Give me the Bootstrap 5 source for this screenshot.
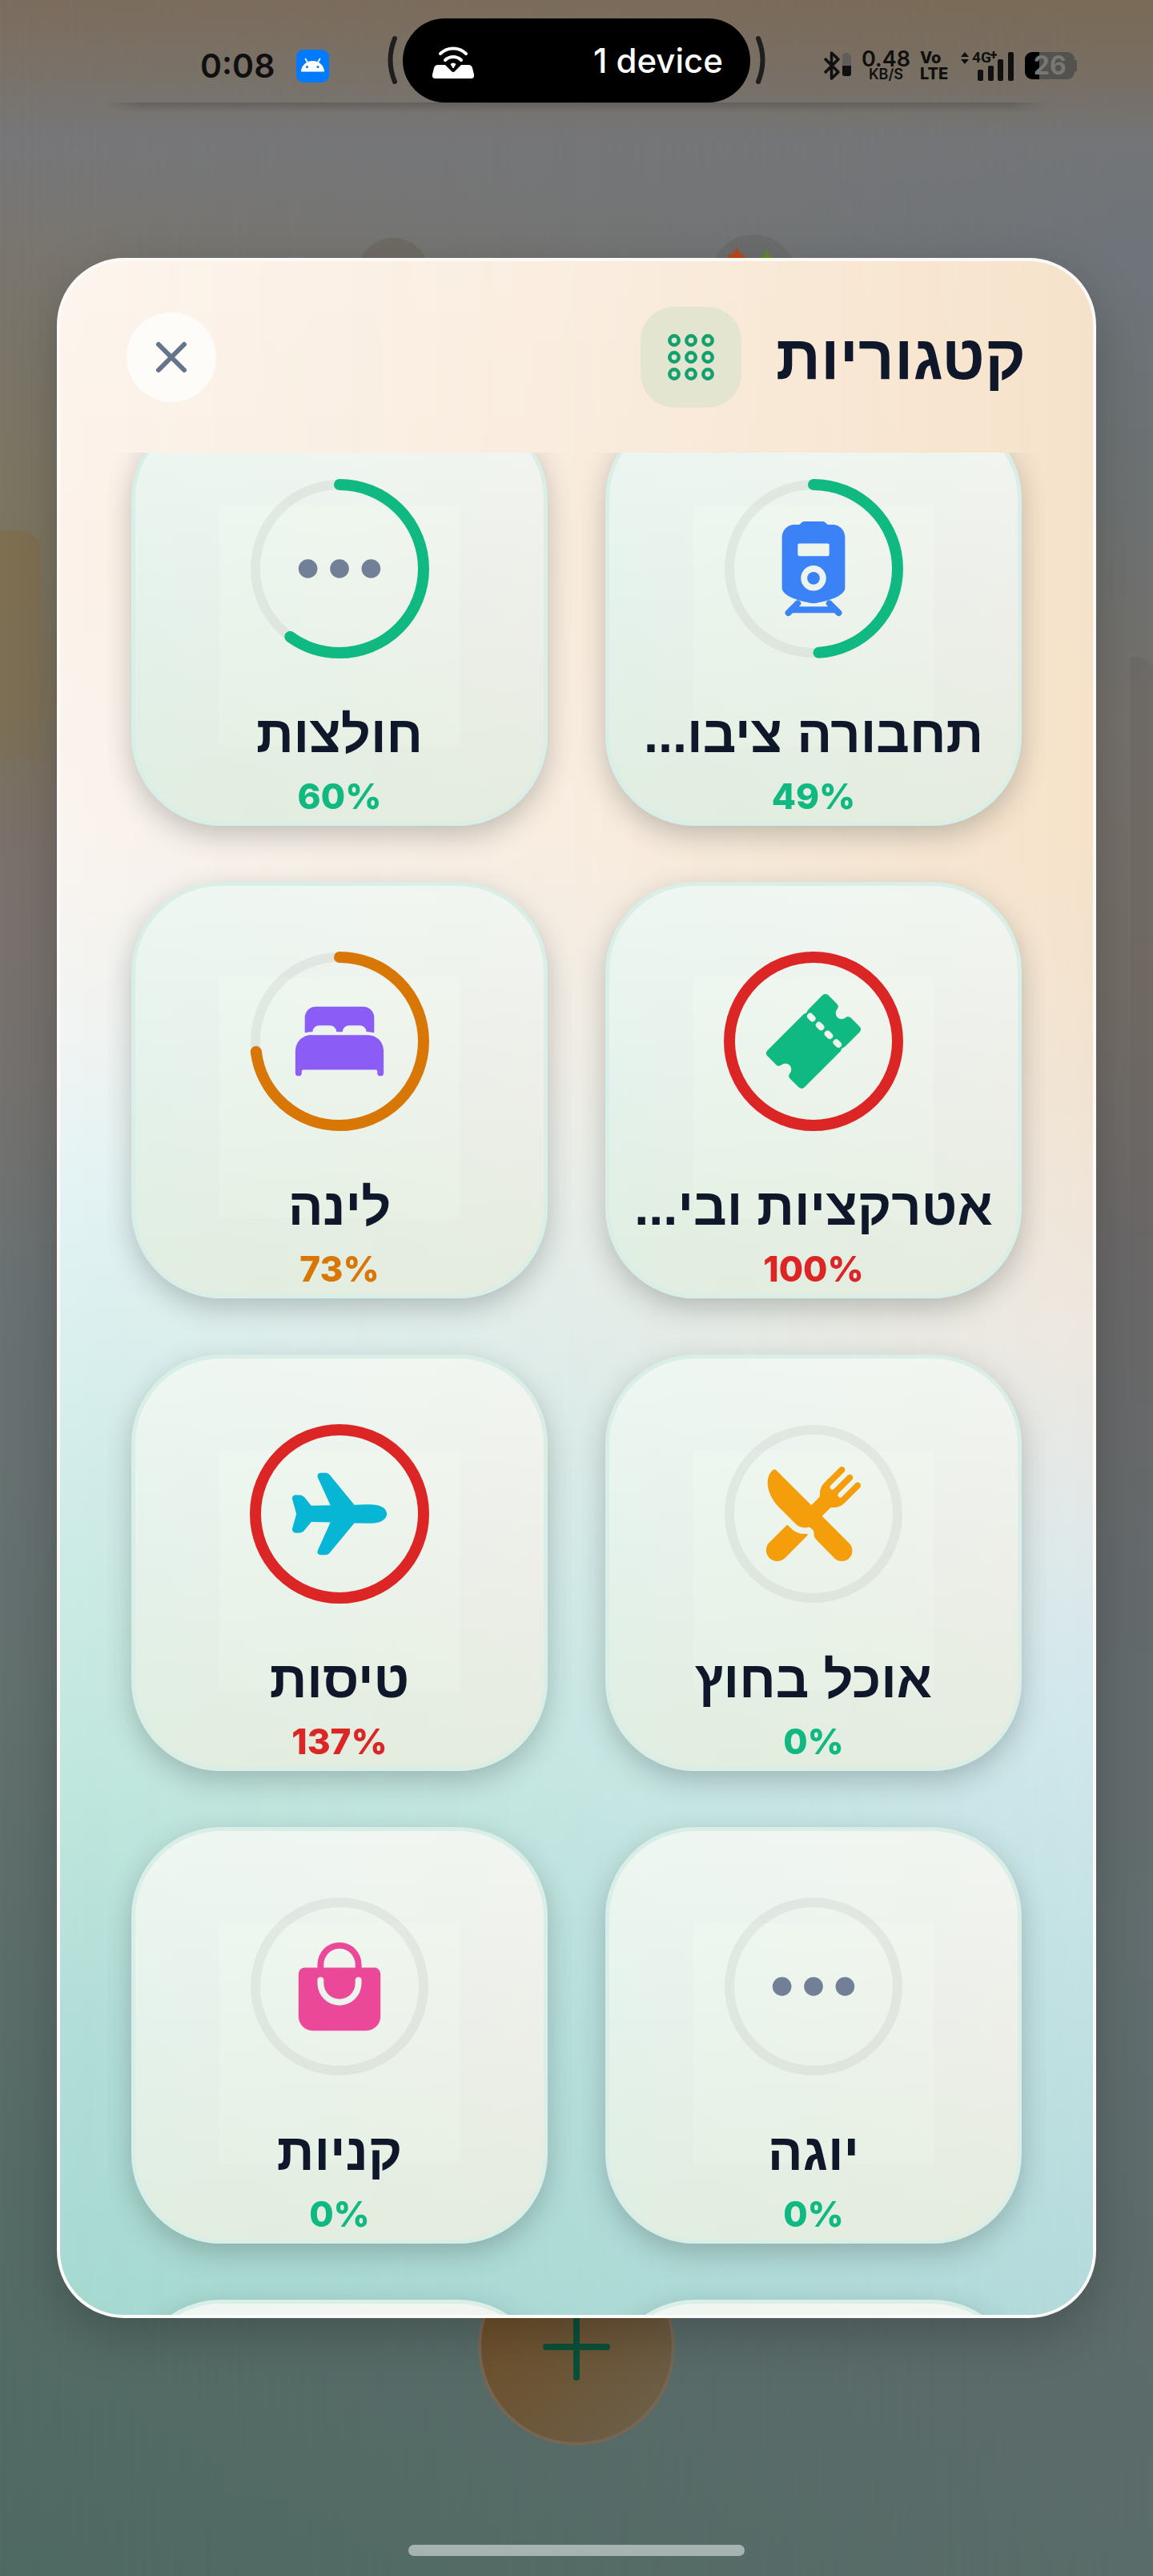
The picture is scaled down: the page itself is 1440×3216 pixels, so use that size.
<!DOCTYPE html>
<html lang="he">
<head>
<meta charset="utf-8">
<meta name="viewport" content="width=device-width, initial-scale=1">
<title>קטגוריות</title>
<link href="https://cdn.jsdelivr.net/npm/bootstrap@5.3.0/dist/css/bootstrap.min.css" rel="stylesheet">
<style>
:root{--ink:#0f172a;--green:#10b981;--red:#dc2626;--amber:#d97706}
body{margin:0;font-family:Inter,"Liberation Sans",sans-serif;background:#6b7273}
.screen{height:100vh;overflow:hidden;position:relative;isolation:isolate;
  background:linear-gradient(to bottom,#7c6d5e 0,#7a736a 3%,#77777a 5.5%,#7a766e 10%,#7c7662 19%,#7b7159 27%,#7b716c 33%,#75726f 42%,#6a7273 50%,#62706e 66%,#576c67 84%,#4f6a63 100%)}
.screen::before{content:"";position:absolute;inset:0;z-index:-1;
  background:linear-gradient(to bottom,#7a6a56 0,#786e63 3%,#737577 5.5%,#6e747a 10%,#6c7172 19%,#74706b 28%,#736d66 38%,#6b6868 48%,#646a6c 62%,#616d6e 75%,#5d6b6b 90%,#5a6c69 100%);
  -webkit-mask-image:linear-gradient(to right,transparent,#000);mask-image:linear-gradient(to right,transparent,#000)}
/* status bar */
.statusbar{display:grid;grid-template-columns:minmax(0,1fr) auto minmax(0,1fr);height:128px;padding-top:23px;color:#101010}
.status-side{height:105px;padding-top:13px}
.status-start{padding-left:250px;gap:27px}
.status-end{padding-left:72px;gap:12px}
.clock{font-size:41px;font-weight:600;line-height:48px}
.pill{width:434px;height:105px;border-radius:53px;background:#000;color:#fff;padding:0 34px 0 36px;font-size:42px;font-weight:500}
.net-a{font-size:27px;font-weight:600;line-height:21px}
.net-b{font-size:18px;font-weight:600;line-height:18px}
.net-c{font-size:20px;font-weight:800;line-height:20px}
.battery{width:62px;height:34px;border-radius:9px;background:linear-gradient(to right,#000 18px,#53524e 18px);color:#777774;font-size:32px;font-weight:700;line-height:34px}
/* page behind the sheet */
.behind{height:194px;overflow:hidden}
.edge-shadow{height:12px;margin:0 130px;background:linear-gradient(to bottom,rgba(40,40,40,.26),rgba(40,40,40,0));
  -webkit-mask-image:linear-gradient(to right,transparent,#000 4%,#000 96%,transparent);mask-image:linear-gradient(to right,transparent,#000 4%,#000 96%,transparent)}
.behind-icons{padding-top:153px;gap:351px;padding-left:446px}
.ghost{width:90px;height:90px;border-radius:50%;background:#6f6b64;margin-top:4px}
.ghost-lg{width:108px;height:108px;border-radius:50%;background:#6a6d6b}
.blob{position:absolute;left:0;top:662px;width:51px;height:284px;background:linear-gradient(to bottom,rgba(128,110,78,.85),rgba(124,110,84,.5));border-radius:0 26px 0 0;z-index:-1}
.blob-end{position:absolute;right:0;top:820px;width:28px;height:1000px;background:linear-gradient(to bottom,rgba(60,50,50,.1),transparent);border-radius:0 20px 0 0;z-index:-1}
/* sheet */
.sheet-wrap{flex:1 1 0;min-height:0;filter:drop-shadow(0 20px 30px rgba(0,0,0,.2))}
.sheet{flex:1 1 0;min-height:0;margin:0 71px;border:4px solid #fbfaf8;border-radius:84px;overflow:hidden;position:relative;isolation:isolate;
  background:linear-gradient(to bottom,#fdf5ee 0,#fbf2e9 15%,#faf4ef 28%,#f0f4f3 38%,#e2f3f4 46%,#d0ece8 60%,#c0e7dd 74%,#b2ded8 86%,#a6dad1 100%)}
.sheet::before{content:"";position:absolute;inset:0;z-index:-1;
  background:linear-gradient(to bottom,#f6e2ca 0,#f6e2c9 28%,#f1e3d2 40%,#eee7df 52%,#e0e8e9 62%,#d2e7ec 70%,#c4e2e4 82%,#b4dadb 100%);
  -webkit-mask-image:linear-gradient(to right,transparent,rgba(0,0,0,.4) 50%,#000);mask-image:linear-gradient(to right,transparent,rgba(0,0,0,.4) 50%,#000)}
.sheet-head{height:239px;padding:0 84px 0 83px}
.sheet-title{font:700 78px/96px "Liberation Sans",sans-serif;color:var(--ink);margin:0 0 0 43px}
.title-tile{width:126px;height:126px;border-radius:42px;background:#e4e5d1}
.close-btn{width:112px;height:112px;border-radius:50%;background:rgba(255,255,255,.72);border:0;padding:0}
.scroller{margin:0 59px;padding:0 30px;overflow:hidden;flex:1 1 0;min-height:0}
.cat-grid{--bs-gutter-x:72px;--bs-gutter-y:70px;margin-top:-124px}
.cat-card{--bs-btn-padding-x:0;--bs-btn-padding-y:0;width:100%;aspect-ratio:1;border:5px solid #d9eee6;border-radius:112px;padding:82px 20px 0;
  background:
   linear-gradient(rgba(244,255,242,.28),rgba(240,250,236,.2)) no-repeat 105px 115px/300px 300px,
   linear-gradient(to bottom,rgba(246,250,247,.6),rgba(235,240,235,0) 50%,rgba(220,234,214,.5)),
   linear-gradient(100deg,#e3f2eb,#e9f0e9 50%,#eeeee8) #e9f0e9;
  box-shadow:0 12px 34px rgba(50,60,60,.28)}
.cat-card:hover,.cat-card:active{border-color:#d9eee6}
.ring{width:224px;height:224px;flex:none}
.ring-track{fill:none;stroke:rgba(0,0,0,.05);stroke-width:12}
.ring-value{fill:none;stroke-width:14;stroke-linecap:round}
.cat-name{font:700 65px/80px "Liberation Sans",sans-serif;color:var(--ink);margin-top:55px;white-space:nowrap}
.cat-pct{font-size:44px;font-weight:800;line-height:60px;margin-top:7px}
.is-ok{color:var(--green)}.is-warn{color:var(--amber)}.is-over{color:var(--red)}
/* bottom */
.dock{height:322px;overflow:hidden}
.fab{width:246px;height:246px;border-radius:50%;border:4px solid #766755;margin-top:-87px;padding:0;background:linear-gradient(135deg,#6e4d26,#6c5434 45%,#6c614d)}
.home-bar{width:420px;height:14px;border-radius:7px;background:#a7b3b0;margin-bottom:25px}
</style>
</head>
<body>
<div class="screen d-flex flex-column">
  <div class="blob"></div>
  <div class="blob-end"></div>

  <header class="statusbar">
    <div class="status-side status-start d-flex align-items-center">
      <span class="clock">0:08</span>
      <svg width="41" height="41" viewBox="0 0 41 41" aria-hidden="true"><rect width="41" height="41" rx="9" fill="#007aff"/><path d="M6 27.500a14.500 13.500 0 0 1 29 0z" fill="#fff"/><path d="M11.500 11.500l3 5M29.500 11.500l-3 5" stroke="#fff" stroke-width="1.800" stroke-linecap="round"/><circle cx="13.500" cy="21.500" r="1.500" fill="#007aff"/><circle cx="27" cy="21.500" r="1.500" fill="#007aff"/></svg>
    </div>
    <div class="d-flex align-items-center">
      <svg width="19" height="105" viewBox="0 0 19 105" aria-hidden="true"><path d="M9 25Q-2 52 9 79" fill="none" stroke="#1f1f1f" stroke-width="6" stroke-linecap="round"/></svg>
      <div class="pill d-flex align-items-center justify-content-between">
        <svg width="54" height="44" viewBox="0 0 54 44" aria-hidden="true"><path d="M11 13a23 23 0 0 1 32 0M17 21a14.500 14.500 0 0 1 20 0" fill="none" stroke="#fff" stroke-width="4" stroke-linecap="round"/><path d="M8 27h9l8 8q2 2 4 0l8-8h9q4 0 5 4l2 8q1 5-4 5H5q-5 0-4-5l2-8q1-4 5-4z" fill="#fff"/><path d="M24 26a5 5 0 0 1 6 0l-3 5z" fill="#fff" stroke="#fff"/></svg>
        <span>1 device</span>
      </div>
      <svg width="19" height="105" viewBox="0 0 19 105" aria-hidden="true"><path d="M10 25Q21 52 10 79" fill="none" stroke="#1f1f1f" stroke-width="6" stroke-linecap="round"/></svg>
    </div>
    <div class="status-side status-end d-flex align-items-center">
      <svg class="flex-shrink-0" width="36" height="38" viewBox="0 0 36 38" aria-hidden="true"><path d="M2 10l17 17-8.500 8V3L19 11 2 28" fill="none" stroke="#101010" stroke-width="3.500" stroke-linejoin="round"/><path d="M24 7q0-2 2-2.500V3h6v1.500q3 .5 3 2.500v13H24z" fill="#5f5e5b"/><path d="M24 19h11v10q0 3-3 3h-5q-3 0-3-3z" fill="#101010"/></svg>
      <div class="text-center"><div class="net-a">0.48</div><div class="net-b">KB/S</div></div>
      <div><div class="net-c">Vo</div><div class="net-c">LTE</div></div>
      <svg class="flex-shrink-0 ms-1" width="68" height="38" viewBox="0 0 68 38" aria-hidden="true"><path d="M0 8l5-6 5 6zM0 11l5 6 5-6z" fill="#101010"/><text x="14" y="15" font-family="Roboto" font-weight="700" font-size="19" fill="#101010">4G</text><path d="M41 1v9M37 5.500h8" stroke="#101010" stroke-width="2.500"/><g fill="#101010"><rect x="21" y="24" width="7" height="14" rx="2"/><rect x="34" y="19" width="7" height="19" rx="2"/><rect x="46" y="11" width="7" height="27" rx="2"/><rect x="59" y="2" width="7" height="36" rx="2"/></g></svg>
      <div class="d-flex align-items-center flex-shrink-0"><div class="battery text-center">26</div><svg width="3" height="14" aria-hidden="true"><rect width="3" height="14" rx="1" fill="#53524e"/></svg></div>
    </div>
  </header>

  <div class="behind flex-shrink-0">
    <div class="edge-shadow"></div>
    <div class="behind-icons d-flex">
      <div class="ghost"></div>
      <div class="ghost-lg"><svg width="108" height="40" viewBox="0 0 108 40" aria-hidden="true"><path d="M33 14q2 7 5 10 6 1 6 3-2 4-11 4t-11-4q0-2 6-3 3-3 5-10z" fill="#b8481c"/><path d="M71 18q2 7 4 9 5 1 5 4l-18 0q0-3 5-4 2-2 4-9z" fill="#5f8a24"/></svg></div>
    </div>
  </div>

  <div class="sheet-wrap d-flex flex-column">
  <main class="sheet d-flex flex-column" dir="rtl">
    <div class="sheet-head d-flex align-items-center flex-shrink-0">
      <h1 class="sheet-title">קטגוריות</h1>
      <div class="title-tile d-flex align-items-center justify-content-center">
        <svg width="60" height="60" viewBox="0 0 60 60" fill="none" stroke="#12a06f" stroke-width="4.500" aria-hidden="true"><circle cx="9" cy="9" r="5.700"/><circle cx="30" cy="9" r="5.700"/><circle cx="51" cy="9" r="5.700"/><circle cx="9" cy="30" r="5.700"/><circle cx="30" cy="30" r="5.700"/><circle cx="51" cy="30" r="5.700"/><circle cx="9" cy="51" r="5.700"/><circle cx="30" cy="51" r="5.700"/><circle cx="51" cy="51" r="5.700"/></svg>
      </div>
      <div class="flex-grow-1"></div>
      <button type="button" class="close-btn d-flex align-items-center justify-content-center" aria-label="סגור">
        <svg width="44" height="44" viewBox="0 0 44 44" aria-hidden="true"><path d="M6 6l32 32M38 6L6 38" stroke="#64748b" stroke-width="6" stroke-linecap="round"/></svg>
      </button>
    </div>

    <div class="scroller">
      <div class="cat-grid row row-cols-2">
        <div class="col"><button type="button" class="btn cat-card d-flex flex-column align-items-center">
          <svg class="ring" viewBox="0 0 224 224" aria-hidden="true"><circle class="ring-track" cx="112" cy="112" r="105"/><circle class="ring-value" cx="112" cy="112" r="105" stroke="#10b981" pathLength="100" stroke-dasharray="49 100" transform="rotate(-90 112 112)"/><svg x="49" y="49" width="126" height="126" viewBox="0 0 512 512" fill="#3b82f6"><path fill-rule="evenodd" d="M184 32l14-12q5-4 10-4h96q5 0 10 4l14 12h24c38 0 64 30 64 64v256c0 36-64 64-160 80-96-16-160-44-160-80V96c0-34 26-64 64-64zM184 128q-8 0-8 8v48q0 8 8 8h144q8 0 8-8v-48q0-8-8-8zM256 240a64 64 0 1 0 0 128 64 64 0 0 0 0-128z"/><circle cx="256" cy="304" r="32"/><path d="M176 432l-48 48M336 432l48 48M150 464h212" fill="none" stroke="#3b82f6" stroke-width="32" stroke-linecap="round"/></svg></svg>
          <span class="cat-name">תחבורה ציבו...</span><span class="cat-pct is-ok" dir="ltr">49%</span></button></div>
        <div class="col"><button type="button" class="btn cat-card d-flex flex-column align-items-center">
          <svg class="ring" viewBox="0 0 224 224" aria-hidden="true"><circle class="ring-track" cx="112" cy="112" r="105"/><circle class="ring-value" cx="112" cy="112" r="105" stroke="#10b981" pathLength="100" stroke-dasharray="60 100" transform="rotate(-90 112 112)"/><svg x="49" y="49" width="126" height="126" viewBox="0 0 512 512" fill="#718096"><circle cx="96" cy="256" r="48"/><circle cx="256" cy="256" r="48"/><circle cx="416" cy="256" r="48"/></svg></svg>
          <span class="cat-name">חולצות</span><span class="cat-pct is-ok" dir="ltr">60%</span></button></div>

        <div class="col"><button type="button" class="btn cat-card d-flex flex-column align-items-center">
          <svg class="ring" viewBox="0 0 224 224" aria-hidden="true"><circle class="ring-value" cx="112" cy="112" r="105" stroke="#dc2626"/><svg x="49" y="49" width="126" height="126" viewBox="0 0 512 512" fill="#10b981"><path d="M490.180 181.400l-44.130-44.130a20 20 0 00-27-1 30.810 30.810 0 01-41.680-1.600 30.810 30.810 0 01-1.600-41.670 20 20 0 00-1-27L330.600 21.820a19.910 19.910 0 00-28.130 0l-70.350 70.340a39.870 39.870 0 00-9.570 15.500 7.710 7.710 0 01-4.830 4.830 39.780 39.780 0 00-15.500 9.580l-180.400 180.400a19.910 19.910 0 000 28.130l44.130 44.130a20 20 0 0027 1 30.810 30.810 0 0141.680 1.600 30.810 30.810 0 011.600 41.670 20 20 0 001 27l44.130 44.130a19.910 19.910 0 0028.130 0l180.400-180.400a39.820 39.820 0 009.580-15.490 7.690 7.690 0 014.840-4.840 39.840 39.840 0 0015.490-9.570l70.340-70.350a19.910 19.910 0 00.040-28.080zm-228.370-29.650a16 16 0 01-22.630 0l-11.510-11.510a16 16 0 0122.630-22.620l11.510 11.500a16 16 0 010 22.630zm44 44a16 16 0 01-22.620 0l-11-11a16 16 0 1122.630-22.630l11 11a16 16 0 01.010 22.660zm44 44a16 16 0 01-22.630 0l-11-11a16 16 0 0122.630-22.620l11 11a16 16 0 01.050 22.670zm44.050 44a16 16 0 01-22.630 0l-11.500-11.500a16 16 0 0122.620-22.620l11.500 11.500a16 16 0 010 22.630z"/></svg></svg>
          <span class="cat-name">אטרקציות ובי...</span><span class="cat-pct is-over" dir="ltr">100%</span></button></div>
        <div class="col"><button type="button" class="btn cat-card d-flex flex-column align-items-center">
          <svg class="ring" viewBox="0 0 224 224" aria-hidden="true"><circle class="ring-track" cx="112" cy="112" r="105"/><circle class="ring-value" cx="112" cy="112" r="105" stroke="#d97706" pathLength="100" stroke-dasharray="73 100" transform="rotate(-90 112 112)"/><svg x="49" y="49" width="126" height="126" viewBox="0 0 512 512" fill="#8b5cf6"><path d="M432 230.700a79.440 79.440 0 00-32-6.700H112a79.510 79.510 0 00-32 6.690A80.090 80.090 0 0032 304v112a16 16 0 0032 0v-8a8.100 8.100 0 018-8h368a8.100 8.100 0 018 8v8a16 16 0 0032 0V304a80.090 80.090 0 00-48-73.300zM376 80H136a56 56 0 00-56 56v72a4 4 0 005.110 3.840A95.500 95.500 0 01112 208h4.230a4 4 0 004-3.550A32 32 0 01152 176h56a32 32 0 0131.800 28.450 4 4 0 004 3.550h24.460a4 4 0 004-3.550A32 32 0 01304 176h56a32 32 0 0131.800 28.450 4 4 0 004 3.550h4.200a95.500 95.500 0 0126.890 3.850A4 4 0 00432 208v-72a56 56 0 00-56-56z"/></svg></svg>
          <span class="cat-name">לינה</span><span class="cat-pct is-warn" dir="ltr">73%</span></button></div>

        <div class="col"><button type="button" class="btn cat-card d-flex flex-column align-items-center">
          <svg class="ring" viewBox="0 0 224 224" aria-hidden="true"><circle class="ring-track" cx="112" cy="112" r="105"/><svg x="49" y="49" width="126" height="126" viewBox="0 0 512 512" fill="#f59e0b"><path d="M357.570 223.940a79.480 79.480 0 0056.580-23.440l77-76.950c6.090-6.090 6.650-16 .85-22.390a16 16 0 00-23.170-.56l-68.630 68.580a12.290 12.290 0 01-17.370 0c-4.790-4.780-4.530-12.860.25-17.640l68.330-68.330a16 16 0 00-.56-23.160A15.620 15.620 0 00440.270 56a16.710 16.710 0 00-11.810 4.900l-68.270 68.260a12.290 12.290 0 01-17.370 0c-4.780-4.780-4.530-12.860.25-17.640l68.330-68.310a16 16 0 00-.56-23.160A15.620 15.620 0 00400.260 16a16.730 16.730 0 00-11.810 4.900L311.500 97.850a79.490 79.490 0 00-23.440 56.590v8.230a16 16 0 01-4.690 11.330l-35.610 35.620a4 4 0 01-5.660 0L68.820 36.330a16 16 0 00-22.580-.06C31.090 51.280 23 72.470 23 97.540c-.1 41.400 21.660 89 56.790 124.080l85.450 85.450A64.790 64.790 0 00211 326a64 64 0 0016.210-2.080 16.240 16.240 0 014.070-.53 15.930 15.930 0 0110.830 4.250l11.390 10.520a16.120 16.120 0 014.600 11.230v5.540a47.730 47.730 0 0013.770 33.650l90.050 91.570.09.1a53.290 53.290 0 0075.360-75.370L302.390 269.900a4 4 0 010-5.660L338 228.630a16 16 0 0111.320-4.690z"/><path d="M211 358a97.320 97.320 0 01-68.360-28.250l-13.860-13.860a8 8 0 00-11.300 0l-85 84.560c-15.150 15.150-20.560 37.450-13.060 59.290a30.630 30.630 0 001.490 3.600C31 484 50.580 496 72 496a55.680 55.680 0 0039.640-16.440L225 365.660a4.690 4.690 0 001.320-3.720v-.26a4.630 4.630 0 00-5.150-4.270A97.090 97.090 0 01211 358z"/></svg></svg>
          <span class="cat-name">אוכל בחוץ</span><span class="cat-pct is-ok" dir="ltr">0%</span></button></div>
        <div class="col"><button type="button" class="btn cat-card d-flex flex-column align-items-center">
          <svg class="ring" viewBox="0 0 224 224" aria-hidden="true"><circle class="ring-value" cx="112" cy="112" r="105" stroke="#dc2626"/><svg x="49" y="49" width="126" height="126" viewBox="0 0 512 512" fill="#06b6d4"><path d="M186.620 464H160a16 16 0 01-14.570-22.600l64.460-142.250L113.100 297l-35.300 42.770C71.070 348.230 65.700 352 52 352H34.080a17.660 17.660 0 01-14.700-7.060c-2.380-3.210-4.720-8.650-2.440-16.410l19.820-71c.15-.53.33-1.060.53-1.580a.38.38 0 000-.15 14.820 14.820 0 01-.53-1.590l-19.840-71.450c-2.150-7.610.2-12.930 2.560-16.060a16.830 16.830 0 0113.600-6.700H52c10.230 0 20.160 4.590 26 12l34.570 42.050 97.320-1.440-64.440-142A16 16 0 01160 48h26.910a25 25 0 0119.350 9.800l125.050 152 57.770-1.520c4.230-.23 15.950-.31 18.660-.31C463 208 496 225.940 496 256c0 9.460-3.780 27-29.070 38.160-14.930 6.600-34.850 9.940-59.210 9.940-2.680 0-14.370-.08-18.660-.31l-57.760-1.540-125.360 152a25 25 0 01-19.320 9.750z"/></svg></svg>
          <span class="cat-name">טיסות</span><span class="cat-pct is-over" dir="ltr">137%</span></button></div>

        <div class="col"><button type="button" class="btn cat-card d-flex flex-column align-items-center">
          <svg class="ring" viewBox="0 0 224 224" aria-hidden="true"><circle class="ring-track" cx="112" cy="112" r="105"/><svg x="49" y="49" width="126" height="126" viewBox="0 0 512 512" fill="#718096"><circle cx="96" cy="256" r="48"/><circle cx="256" cy="256" r="48"/><circle cx="416" cy="256" r="48"/></svg></svg>
          <span class="cat-name">יוגה</span><span class="cat-pct is-ok" dir="ltr">0%</span></button></div>
        <div class="col"><button type="button" class="btn cat-card d-flex flex-column align-items-center">
          <svg class="ring" viewBox="0 0 224 224" aria-hidden="true"><circle class="ring-track" cx="112" cy="112" r="105"/><svg x="49" y="49" width="126" height="126" viewBox="0 0 512 512" fill="#ec4899"><path d="M454.660 169.400A31.860 31.860 0 00432 160h-64v-16a112 112 0 00-224 0v16H80a32 32 0 00-32 32v216c0 39 33 72 72 72h272a72.220 72.220 0 0050.480-20.550 69.480 69.480 0 0021.520-50.200V192a31.750 31.750 0 00-9.340-22.600zM176 144a80 80 0 01160 0v16H176zm192 96a112 112 0 01-224 0v-16a16 16 0 0132 0v16a80 80 0 00160 0v-16a16 16 0 0132 0z"/></svg></svg>
          <span class="cat-name">קניות</span><span class="cat-pct is-ok" dir="ltr">0%</span></button></div>

        <div class="col"><button type="button" class="btn cat-card" aria-label="קטגוריה"></button></div>
        <div class="col"><button type="button" class="btn cat-card" aria-label="קטגוריה"></button></div>
      </div>
    </div>
  </main>
  </div>

  <footer class="dock d-flex flex-column align-items-center justify-content-between flex-shrink-0">
    <button type="button" class="fab flex-shrink-0 d-flex align-items-center justify-content-center" aria-label="הוספה">
      <svg width="88" height="88" viewBox="0 0 88 88" aria-hidden="true"><path d="M44 6v76M6 44h76" stroke="#0a5038" stroke-width="8" stroke-linecap="round"/></svg>
    </button>
    <div class="home-bar"></div>
  </footer>
</div>
<script src="https://cdn.jsdelivr.net/npm/bootstrap@5.3.0/dist/js/bootstrap.bundle.min.js"></script>
</body>
</html>
